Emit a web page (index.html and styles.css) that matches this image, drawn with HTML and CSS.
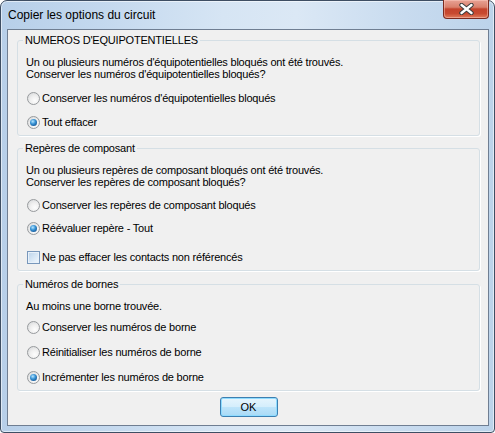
FILE: index.html
```html
<!DOCTYPE html>
<html lang="fr">
<head>
<meta charset="utf-8">
<title>Copier les options du circuit</title>
<link rel="stylesheet" href="styles.css">
</head>
<body>
<div class="window">
  <div class="titlebar">
    <div class="title">Copier les options du circuit</div>
    <div class="close">
      <svg width="15" height="12" viewBox="0 0 15 12" aria-hidden="true">
        <path d="M2.5 2 L12.5 10 M12.5 2 L2.5 10" stroke="#3b3b3b" stroke-width="4.4" stroke-linecap="round"/>
        <path d="M2.5 2 L12.5 10 M12.5 2 L2.5 10" stroke="#ffffff" stroke-width="2.4" stroke-linecap="round"/>
      </svg>
    </div>
  </div>
  <div class="client">
    <fieldset class="group g1">
      <legend>NUMEROS D'EQUIPOTENTIELLES</legend>
      <p class="msg">Un ou plusieurs numéros d'équipotentielles bloqués ont été trouvés.<br>Conserver les numéros d'équipotentielles bloqués?</p>
      <div class="opt mt12"><span class="radio"></span><span>Conserver les numéros d'équipotentielles bloqués</span></div>
      <div class="opt mt11"><span class="radio on"></span><span>Tout effacer</span></div>
    </fieldset>
    <fieldset class="group g2">
      <legend>Repères de composant</legend>
      <p class="msg">Un ou plusieurs repères de composant bloqués ont été trouvés.<br>Conserver les repères de composant bloqués?</p>
      <div class="opt mt11"><span class="radio"></span><span>Conserver les repères de composant bloqués</span></div>
      <div class="opt mt10"><span class="radio on"></span><span>Réévaluer repère - Tout</span></div>
      <div class="opt mt16"><span class="check"></span><span>Ne pas effacer les contacts non référencés</span></div>
    </fieldset>
    <fieldset class="group g3">
      <legend>Numéros de bornes</legend>
      <p class="msg">Au moins une borne trouvée.</p>
      <div class="opt mt9"><span class="radio"></span><span>Conserver les numéros de borne</span></div>
      <div class="opt mt12"><span class="radio"></span><span>Réinitialiser les numéros de borne</span></div>
      <div class="opt mt12"><span class="radio on"></span><span>Incrémenter les numéros de borne</span></div>
    </fieldset>
    <button class="btn" type="button">OK</button>
  </div>
</div>
</body>
</html>
```

FILE: styles.css
```css
html, body {
  margin: 0;
  padding: 0;
}
body {
  width: 495px;
  height: 433px;
  overflow: hidden;
  background: #ffffff;
  font-family: "Liberation Sans", Arial, sans-serif;
  color: #000;
}
.window {
  box-sizing: border-box;
  width: 495px;
  height: 433px;
  border: 1px solid #3e4e63;
  border-radius: 7px 7px 4px 4px;
  background: linear-gradient(90deg, #b7cfe9 0%, #c3d8ee 20%, #d6e5f4 45%, #dbe8f5 60%, #c8dbef 82%, #bcd3ea 100%);
  box-shadow: inset 0 0 0 1px rgba(255, 255, 255, 0.55);
  padding: 0 5px 6px 6px;
  display: flex;
  flex-direction: column;
}
.titlebar {
  height: 28px;
  flex: none;
  display: flex;
  justify-content: space-between;
  align-items: flex-start;
}
.title {
  font-size: 12px;
  line-height: 15px;
  padding: 7px 0 0 1px;
  color: #000;
}
.close {
  box-sizing: border-box;
  width: 46px;
  height: 19px;
  margin-top: -1px;
  border: 1px solid #7a2a1f;
  border-top: none;
  border-radius: 0 0 4px 4px;
  background: linear-gradient(180deg, #e8a295 0%, #d9806c 40%, #c4432c 50%, #c84a30 75%, #e07c5c 100%);
  box-shadow: inset 0 0 0 1px rgba(255, 210, 200, 0.45);
  display: flex;
  align-items: center;
  justify-content: center;
}
.client {
  flex: 1;
  box-sizing: border-box;
  border: 1px solid #6f7e92;
  background: #f0f0f0;
  padding: 3px 8px 0 9px;
  display: flex;
  flex-direction: column;
}
.group {
  margin: 0;
  border: 1px solid #d5dfe5;
  border-radius: 3px;
  padding: 0 8px 6px 8px;
  box-shadow: 1px 1px 0 #ffffff;
  font-size: 11px;
  letter-spacing: -0.2px;
}
.g2 {
  margin-top: 5px;
}
.g3 {
  margin-top: 6px;
  padding-bottom: 6px;
}
legend {
  padding: 0 2px;
  margin-left: -3px;
  line-height: 14px;
  font-size: 11px;
}
.msg {
  margin: 9px 0 0 0;
  line-height: 12px;
}
.opt {
  display: flex;
  align-items: center;
  height: 13px;
  gap: 2px;
  line-height: 13px;
}
.mt9 { margin-top: 9px; }
.mt10 { margin-top: 10px; }
.mt11 { margin-top: 11px; }
.mt12 { margin-top: 12px; }
.mt16 { margin-top: 16px; }
.radio {
  position: relative;
  flex: none;
  box-sizing: border-box;
  width: 13px;
  height: 13px;
  margin-left: 1px;
  border-radius: 50%;
  border: 1px solid #979a9d;
  background: radial-gradient(circle at 62% 68%, #fdfdfd 0%, #efefef 45%, #d2d4d6 100%);
}
.radio.on::after {
  content: "";
  position: absolute;
  left: 2px;
  top: 2px;
  width: 7px;
  height: 7px;
  border-radius: 50%;
  background: radial-gradient(circle at 40% 35%, #b8e6ff 0%, #3a95d6 40%, #0f4f8f 85%, #0b3b6e 100%);
}
.check {
  flex: none;
  box-sizing: border-box;
  width: 13px;
  height: 13px;
  margin-left: 1px;
  border: 1px solid #7897bb;
  background: linear-gradient(135deg, #bcd3ea 0%, #d6e6f5 50%, #f2f8fd 100%);
  box-shadow: inset 0 0 0 1px #e8f1fa;
}
.btn {
  align-self: center;
  margin-top: 6px;
  box-sizing: border-box;
  width: 58px;
  height: 20px;
  padding: 0;
  border: 1px solid #3c7fb1;
  border-radius: 3px;
  background: linear-gradient(180deg, #e6f5fd 0%, #d5eefc 48%, #bde4fa 52%, #a9daf6 100%);
  box-shadow: inset 0 0 0 1px #8fdcff;
  font-family: "Liberation Sans", Arial, sans-serif;
  font-size: 11px;
  color: #000;
}
```
